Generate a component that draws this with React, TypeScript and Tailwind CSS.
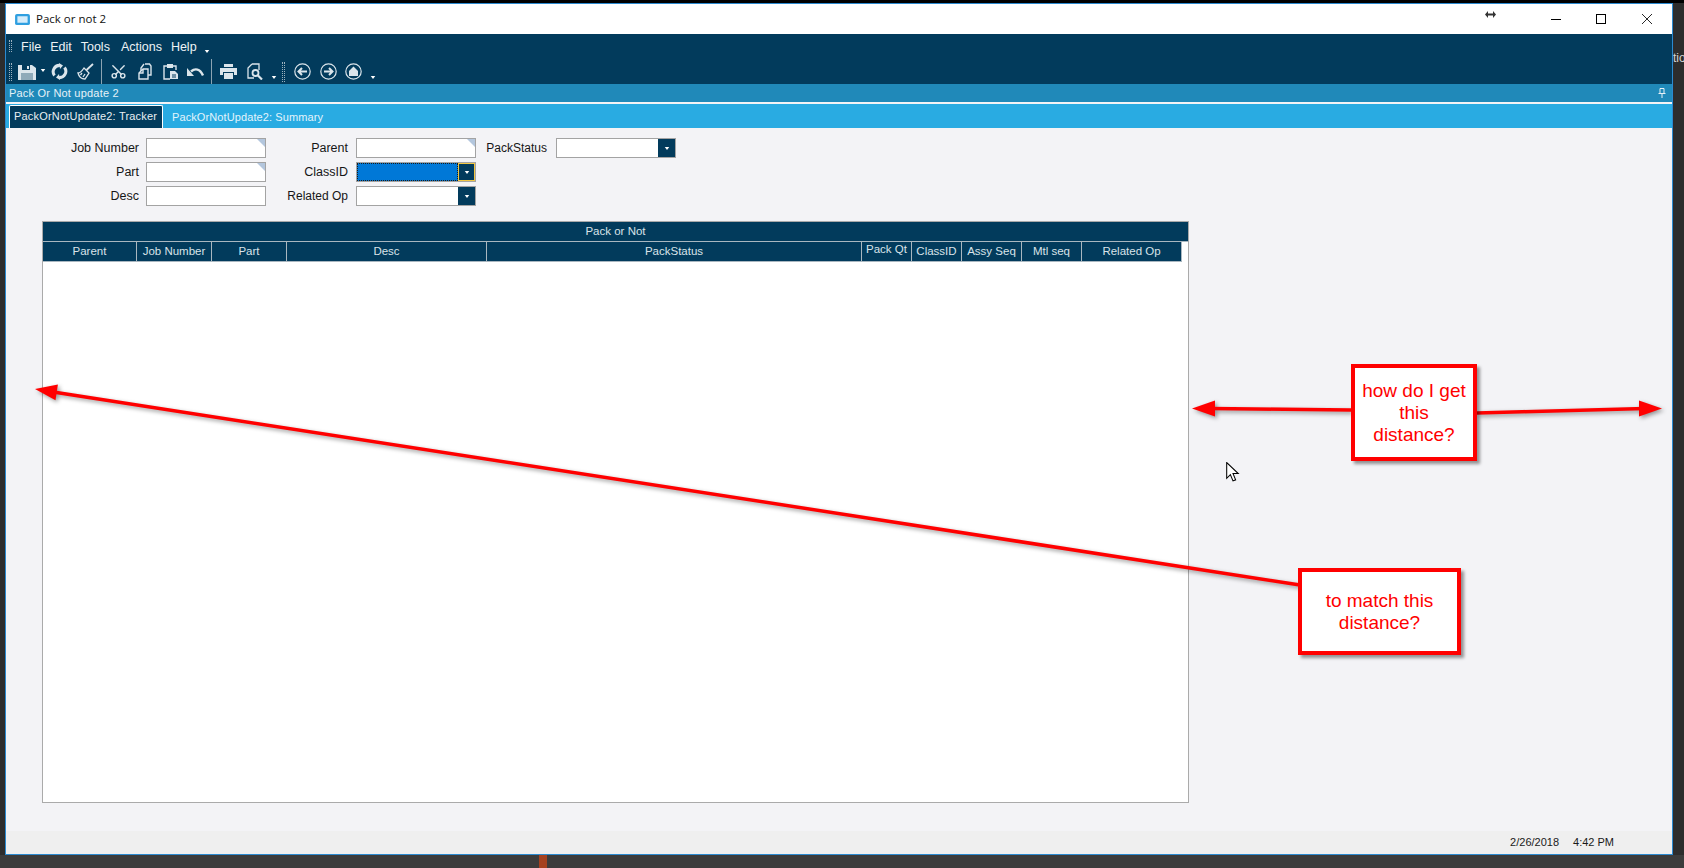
import { Scissors } from 'lucide-react'

const NAVY = 'bg-[#023b5c]'

const columns = [
  { label: 'Parent', width: 'w-[94px]' },
  { label: 'Job Number', width: 'w-[75px]' },
  { label: 'Part', width: 'w-[75px]' },
  { label: 'Desc', width: 'w-[200px]' },
  { label: 'PackStatus', width: 'w-[375px]' },
  { label: 'Pack Qt', width: 'w-[50px]', raised: true },
  { label: 'ClassID', width: 'w-[50px]' },
  { label: 'Assy Seq', width: 'w-[60px]' },
  { label: 'Mtl seq', width: 'w-[60px]' },
  { label: 'Related Op', width: 'w-[100px]' },
]

const Handle = ({ className = '' }: { className?: string }) => (
  <div className={`w-[3px] border-x border-dotted border-[#9db2bf] ${className}`} />
)

const Caret = ({ className = '' }: { className?: string }) => (
  <svg viewBox="0 0 6 4" className={`h-[3px] w-[6px] shrink-0 ${className}`}>
    <path d="M0 0h6L3 4z" fill="#fff" />
  </svg>
)

const Sep = () => <div className="h-[26px] w-px bg-[#8da4b2]" />

const ico = '#dbe5eb'

const SaveIcon = () => (
  <svg viewBox="0 0 18 16" className="h-[16px] w-[18px]">
    <path d="M0 1h14l4 3v12H0z" fill={ico} />
    <path d="M4 1h8v5H4z" fill="#023b5c" />
    <path d="M9 2h2v3H9z" fill={ico} />
    <path d="M3 9h12v7H3z" fill="#023b5c" opacity="0.35" />
  </svg>
)

const RefreshIcon = () => (
  <svg viewBox="0 0 17 17" className="h-[17px] w-[17px]" fill="none" stroke={ico} strokeWidth="3">
    <path d="M3.5 12.5A6.3 6.3 0 0 1 9 2.4" />
    <path d="M13.5 4.5A6.3 6.3 0 0 1 8 14.6" />
    <path d="M8 0l4 2.5L9 6zM9 17l-4-2.5L8 11z" fill={ico} stroke="none" />
  </svg>
)

const BroomIcon = () => (
  <svg viewBox="0 0 17 17" className="h-[17px] w-[17px]" fill="none" stroke={ico} strokeWidth="1.3">
    <path d="M16 1L9.5 7" strokeWidth="1.8" />
    <path d="M7 5l5 5-4 6c-3 0-6-2-7-6 2 0 4-2 6-5z" />
    <path d="M5 10l-1.5 2M8 11l-2 3" />
  </svg>
)

const CopyIcon = () => (
  <svg viewBox="0 0 14 17" className="h-[17px] w-[14px]" fill="none" stroke={ico} strokeWidth="1.4">
    <path d="M7 1h4.5l1.5 2v9h-3" />
    <path d="M6 1L3 5v3" />
    <path d="M5 6L1 10v6h9V6z" />
    <path d="M5 6v4H1" />
  </svg>
)

const PasteIcon = () => (
  <svg viewBox="0 0 16 17" className="h-[17px] w-[16px]" fill="none" stroke={ico} strokeWidth="1.4">
    <path d="M4 3H1v13h6" />
    <path d="M10 3h3v4" />
    <path d="M4 1h6v4H4z" fill={ico} stroke="none" />
    <path d="M7 8h5l3 3v5H7z" fill={ico} stroke="none" />
    <path d="M9 12h4M9 14h4" stroke="#023b5c" strokeWidth="1" />
  </svg>
)

const UndoIcon = () => (
  <svg viewBox="0 0 17 12" className="h-[12px] w-[17px]" fill="none" stroke={ico} strokeWidth="2.4">
    <path d="M4 5.5c4-3.5 9-3 12 4" />
    <path d="M0 2l7 8H0z" fill={ico} stroke="none" />
  </svg>
)

const PrintIcon = () => (
  <svg viewBox="0 0 17 15" className="h-[15px] w-[17px]">
    <path d="M4 0h9v3H4zM0 4h17v7h-3V8H3v3H0z" fill={ico} />
    <path d="M4 9h9v6H4z" fill={ico} />
  </svg>
)

const PreviewIcon = () => (
  <svg viewBox="0 0 16 17" className="h-[17px] w-[16px]" fill="none" stroke={ico} strokeWidth="1.3">
    <path d="M5 1h7v6M5 1L1 5v10h6" />
    <circle cx="8.5" cy="10" r="3" strokeWidth="1.8" />
    <path d="M11 12.5l4 4" strokeWidth="2.2" />
  </svg>
)

const CircleIcon = ({ d }: { d: string }) => (
  <svg viewBox="0 0 17 17" className="h-[17px] w-[17px]" fill="none" stroke={ico}>
    <circle cx="8.5" cy="8.5" r="7.7" strokeWidth="1.2" />
    <path d={d} strokeWidth="2" />
  </svg>
)

const Field = ({ corner }: { corner?: boolean }) => (
  <div className="relative h-[20px] border border-[#a3a3a3] bg-white">
    {corner && (
      <div className="absolute right-0 top-0 h-0 w-0 border-l-[8px] border-t-[8px] border-l-transparent border-t-[#b3c6dd]" />
    )}
  </div>
)

const Combo = ({ active }: { active?: boolean }) => (
  <div className="flex h-[20px] border border-[#a3a3a3] bg-white">
    <div className={`flex-1 ${active ? 'border border-dotted border-[#1b1b1b] bg-[#0078d7]' : ''}`} />
    <div
      className={`flex w-[17px] items-center justify-center ${NAVY} ${
        active ? 'border border-[#f2c744]' : ''
      }`}
    >
      <Caret />
    </div>
  </div>
)

const Label = ({ text, className }: { text: string; className: string }) => (
  <div className={`text-right leading-[20px] text-[#161616] ${className}`}>{text}</div>
)

export default function App() {
  return (
    <div className="relative flex h-[868px] w-[1684px] flex-col overflow-hidden bg-[#3c3c3c] font-['Liberation_Sans',sans-serif]">
      <div className="h-[3px] bg-black" />
      <div className="flex flex-1">
        <div className="w-[5px] bg-[#2d2d2d]" />
        <div className="flex flex-1 flex-col border border-[#2b8ad0] bg-[#f3f3f6]">
          {/* title bar */}
          <div className="flex h-[30px] items-center bg-white pl-[9px]">
            <svg viewBox="0 0 16 14" className="h-[13px] w-[15px]">
              <rect x="0" y="1" width="16" height="12" rx="2" fill="#2f9fe0" />
              <rect x="2.5" y="3.5" width="11" height="7" fill="#d5ecfa" />
            </svg>
            <span className="ml-[6px] w-[68px] whitespace-nowrap font-['Open_Sans',sans-serif] text-[11.5px] text-[#111]">Pack or not 2</span>
            <svg viewBox="0 0 11 7" className="mb-[10px] ml-[1381px] h-[7px] w-[11px]" fill="#333">
              <path d="M0 3.500L3 0v2.500h5V0l3 3.500L8 7V4.500H3V7z" />
            </svg>
            <div className="ml-[55px] h-px w-[10px] bg-black" />
            <div className="ml-[35px] h-[10px] w-[10px] border border-black" />
            <svg viewBox="0 0 10 10" className="ml-[36px] h-[10px] w-[10px]" stroke="#111" strokeWidth="0.9">
              <path d="M0 0l10 10M10 0L0 10" />
            </svg>
          </div>
          {/* menu + toolbar */}
          <div className={`flex h-[50px] flex-col ${NAVY} pl-[3px] text-[#eef3f6]`}>
            <div className="flex h-[23px] items-center pt-[4px]">
              <Handle className="mb-[3px] h-[12px]" />
              <div className="ml-[9px] flex items-center gap-[9px] text-[12.5px]">
                <span>File</span>
                <span>Edit</span>
                <span>Tools</span>
                <span className="ml-[2px]">Actions</span>
                <span>Help</span>
              </div>
              <Caret className="ml-[7px] mt-[8px]" />
            </div>
            <div className="flex h-[27px] items-center pt-[2px]">
              <Handle className="h-[18px]" />
              <div className="ml-[6px]"><SaveIcon /></div>
              <Caret className="ml-[4px] mb-[3px]" />
              <div className="ml-[5px]"><RefreshIcon /></div>
              <div className="ml-[9px]"><BroomIcon /></div>
              <div className="ml-[7px]"><Sep /></div>
              <Scissors className="ml-[8px] h-[17px] w-[17px] -rotate-90 text-[#dbe5eb]" strokeWidth={2} />
              <div className="ml-[11px]"><CopyIcon /></div>
              <div className="ml-[11px]"><PasteIcon /></div>
              <div className="ml-[8px]"><UndoIcon /></div>
              <div className="ml-[7px]"><Sep /></div>
              <div className="ml-[8px]"><PrintIcon /></div>
              <div className="ml-[10px]"><PreviewIcon /></div>
              <Caret className="ml-[8px] mt-[12px]" />
              <Handle className="ml-[5px] h-[20px]" />
              <div className="ml-[9px]"><CircleIcon d="M13 8.5H5M8 5L4.5 8.5 8 12" /></div>
              <div className="ml-[9px]"><CircleIcon d="M4 8.5h8M9 5l3.500 3.500L9 12" /></div>
              <div className="ml-[8px]">
                <svg viewBox="0 0 17 17" className="h-[17px] w-[17px]" fill="none" stroke={ico}>
                  <circle cx="8.5" cy="8.5" r="7.7" strokeWidth="1.2" />
                  <path d="M8.500 3.500L13 8v5H4V8z" fill={ico} stroke="none" />
                </svg>
              </div>
              <Caret className="ml-[8px] mt-[12px]" />
            </div>
          </div>
          {/* pane header */}
          <div className="flex h-[18px] items-center justify-between bg-[#2089b9] pl-[3px] pr-[6px] text-[11px] tracking-[0.2px] text-[#e6f2f8]">
            <span>Pack Or Not update 2</span>
            <svg viewBox="0 0 8 10" className="h-[10px] w-[8px]" fill="none" stroke="#e8f1f6">
              <path d="M2 .5h4v5H2zM.5 5.500h7M4 5.500V10" />
            </svg>
          </div>
          <div className="h-[2px] bg-[#f3f3f6]" />
          {/* tabs */}
          <div className="flex h-[24px] items-end whitespace-nowrap bg-[#29abe2] pl-[3px] text-[11px] tracking-[0.1px]">
            <div className={`h-[23px] w-[154px] rounded-t-[2px] border border-b-0 border-white ${NAVY} pl-[4px] leading-[21px] tracking-[0.2px] text-[#e9eff3]`}>
              PackOrNotUpdate2: Tracker
            </div>
            <div className="ml-[9px] h-[21px] leading-[21px] text-[#e3f4fc]">PackOrNotUpdate2: Summary</div>
          </div>
          {/* form */}
          <div className="grid grid-cols-[140px_120px_90px_120px_80px_120px] gap-y-[4px] pt-[10px] text-[12.5px]">
            <Label text="Job Number" className="pr-[7px]" />
            <Field corner />
            <Label text="Parent" className="pr-[8px]" />
            <Field corner />
            <Label text="PackStatus" className="pr-[9px] text-[12px]" />
            <Combo />
            <Label text="Part" className="pr-[7px]" />
            <Field corner />
            <Label text="ClassID" className="pr-[8px]" />
            <Combo active />
            <div />
            <div />
            <Label text="Desc" className="pr-[7px]" />
            <Field />
            <Label text="Related Op" className="pr-[8px] text-[12px]" />
            <Combo />
          </div>
          {/* table */}
          <div className="ml-[36px] mt-[15px] flex w-[1147px] flex-1 flex-col border border-[#aaaaaa] bg-white text-[11.5px] text-[#d9e3e9]">
            <div className={`h-[20px] border-b border-[#a9b7c0] ${NAVY} text-center leading-[19px]`}>Pack or Not</div>
            <div className="flex h-[20px]">
              {columns.map(col => (
                <div
                  key={col.label}
                  className={`${col.width} h-[20px] border-b border-r border-[#a9b7c0] ${NAVY} text-center ${
                    col.raised ? 'leading-[15px]' : 'leading-[19px]'
                  }`}
                >
                  {col.label}
                </div>
              ))}
            </div>
          </div>
          <div className="mt-[28px] flex h-[23px] items-center justify-end bg-[#efefef] pr-[58px] text-[11px] text-[#1a1a1a]">
            <span>2/26/2018</span>
            <span className="ml-[14px]">4:42 PM</span>
          </div>
        </div>
        <div className="w-[11px] overflow-hidden bg-[#2d2d2d] pt-[46px] text-[12px] text-[#d5d5d5]">tio</div>
      </div>
      <div className="relative h-[13px]">
        <div className="absolute left-[539px] top-0 h-[13px] w-[8px] bg-[#a5411f]" />
      </div>

      {/* annotation arrows */}
      <svg
        viewBox="0 0 1684 868"
        className="pointer-events-none absolute left-0 top-0 h-[868px] w-[1684px] drop-shadow-[2px_2px_2px_rgba(0,0,0,0.4)]"
      >
        <g fill="#ff0000" stroke="#ff0000">
          <path d="M1300 585L50 391.500" strokeWidth="3.500" fill="none" />
          <path d="M35 389L57.900 384.500 55.500 400.300z" stroke="none" />
          <path d="M1351 410L1210 408.500" strokeWidth="3.500" fill="none" />
          <path d="M1192 408.500L1215 400.500V416.500z" stroke="none" />
          <path d="M1477 413L1645 408.500" strokeWidth="3.500" fill="none" />
          <path d="M1662 408.500L1639 400.500V416.500z" stroke="none" />
        </g>
      </svg>

      {/* annotation boxes */}
      <div className="absolute left-[1351px] top-[364px] flex h-[97px] w-[126px] items-center justify-center border-[4px] border-[#ff0000] bg-white text-center text-[19px] leading-[22px] text-[#ff0000] shadow-[3px_3px_3px_rgba(0,0,0,0.4)]">
        how do I get
        <br />
        this
        <br />
        distance?
      </div>
      <div className="absolute left-[1298px] top-[568px] flex h-[87px] w-[163px] items-center justify-center border-[4px] border-[#ff0000] bg-white text-center text-[19px] leading-[22px] text-[#ff0000] shadow-[3px_3px_3px_rgba(0,0,0,0.4)]">
        to match this
        <br />
        distance?
      </div>

      {/* mouse pointer */}
      <svg viewBox="0 0 13 20" className="pointer-events-none absolute left-[1226px] top-[462px] h-[21px] w-[14px]">
        <path d="M.5.500v15l3.500-3.500 2.500 6 2.500-1-2.500-6h5z" fill="#fff" stroke="#000" />
      </svg>
    </div>
  )
}
